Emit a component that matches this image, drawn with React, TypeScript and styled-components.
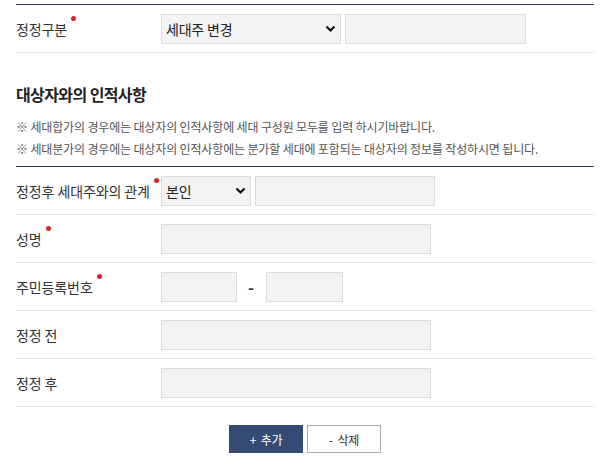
import React from "react";
import styled, { createGlobalStyle } from "styled-components";

const GlobalStyle = createGlobalStyle`
  body {
    margin: 0;
    background: #ffffff;
    font-family: "Noto Sans CJK KR", "Noto Sans", sans-serif;
    color: #333333;
  }
`;

const Page = styled.div`
  padding: 4px 20px 0 16px;
  width: 578px;
`;

const Table = styled.div`
  border-top: 1px solid #2f3d53;
`;

const Row = styled.div`
  display: flex;
  align-items: center;
  height: 47px;
  border-bottom: 1px solid #e6e6e6;
`;

const Label = styled.div`
  width: 145px;
  flex-shrink: 0;
  font-size: 14px;
  letter-spacing: -0.1px;
  color: #333333;
`;

const LabelText = styled.span<{ $required?: boolean }>`
  position: relative;
  &::after {
    content: "";
    display: ${(p) => (p.$required ? "block" : "none")};
    position: absolute;
    right: -9px;
    top: -3px;
    width: 5px;
    height: 5px;
    border-radius: 50%;
    background: #d9252f;
  }
`;

const Field = styled.div`
  display: flex;
  align-items: center;
  gap: 4px;
`;

const TextInput = styled.input<{ $w: number }>`
  box-sizing: border-box;
  width: ${(p) => p.$w}px;
  height: 30px;
  margin: 0;
  background: #f3f3f3;
  border: 1px solid #dcdcdc;
  outline: none;
`;

const SelectWrap = styled.div<{ $w: number }>`
  position: relative;
  width: ${(p) => p.$w}px;
  height: 30px;
`;

const Select = styled.select`
  box-sizing: border-box;
  width: 100%;
  height: 100%;
  margin: 0;
  padding: 0 4px;
  appearance: none;
  background: #f3f3f3;
  border: 1px solid #dcdcdc;
  font-family: "Noto Sans CJK KR", sans-serif;
  font-size: 14px;
  letter-spacing: -0.2px;
  color: #222222;
  outline: none;
`;

const Chevron = styled.svg`
  position: absolute;
  right: 5px;
  top: 11px;
  pointer-events: none;
`;

const Dash = styled.span`
  font-size: 16px;
  font-weight: 700;
  color: #333333;
  margin: 0 8px 0 7px;
`;

const SectionTitle = styled.h3`
  margin: 29px 0 0;
  font-size: 16px;
  font-weight: 700;
  letter-spacing: -0.6px;
  color: #222222;
`;

const Notes = styled.ul`
  list-style: none;
  margin: 10px 0 6px;
  padding: 0;
`;

const Note = styled.li`
  font-size: 12px;
  line-height: 22px;
  letter-spacing: -0.15px;
  color: #555555;
`;

const Buttons = styled.div`
  display: flex;
  justify-content: center;
  gap: 4px;
  margin-top: 18px;
`;

const Button = styled.button<{ $primary?: boolean }>`
  box-sizing: border-box;
  width: 74px;
  height: 28px;
  margin: 0;
  font-family: "Noto Sans CJK KR", sans-serif;
  font-size: 12px;
  letter-spacing: -0.3px;
  border: 1px solid ${(p) => (p.$primary ? "#344c75" : "#aaaaaa")};
  background: ${(p) => (p.$primary ? "#344c75" : "#ffffff")};
  color: ${(p) => (p.$primary ? "#ffffff" : "#333333")};
  cursor: pointer;
`;

const Arrow = () => (
  <Chevron width="11" height="8" viewBox="0 0 11 8">
    <path d="M1.5 1.5 L5.5 5.5 L9.5 1.5" fill="none" stroke="#111" strokeWidth="2.2" />
  </Chevron>
);

export default function App() {
  return (
    <Page>
      <GlobalStyle />
      <Table>
        <Row>
          <Label>
            <LabelText $required>정정구분</LabelText>
          </Label>
          <Field>
            <SelectWrap $w={180}>
              <Select defaultValue="세대주 변경">
                <option>세대주 변경</option>
              </Select>
              <Arrow />
            </SelectWrap>
            <TextInput $w={181} />
          </Field>
        </Row>
      </Table>

      <SectionTitle>대상자와의 인적사항</SectionTitle>
      <Notes>
        <Note>※ 세대합가의 경우에는 대상자의 인적사항에 세대 구성원 모두를 입력 하시기바랍니다.</Note>
        <Note>※ 세대분가의 경우에는 대상자의 인적사항에는 분가할 세대에 포함되는 대상자의 정보를 작성하시면 됩니다.</Note>
      </Notes>

      <Table>
        <Row>
          <Label>
            <LabelText $required>정정후 세대주와의 관계</LabelText>
          </Label>
          <Field>
            <SelectWrap $w={90}>
              <Select defaultValue="본인">
                <option>본인</option>
              </Select>
              <Arrow />
            </SelectWrap>
            <TextInput $w={180} />
          </Field>
        </Row>
        <Row>
          <Label>
            <LabelText $required>성명</LabelText>
          </Label>
          <TextInput $w={270} />
        </Row>
        <Row>
          <Label>
            <LabelText $required>주민등록번호</LabelText>
          </Label>
          <Field>
            <TextInput $w={76} />
            <Dash>-</Dash>
            <TextInput $w={77} />
          </Field>
        </Row>
        <Row>
          <Label>
            <LabelText>정정 전</LabelText>
          </Label>
          <TextInput $w={270} />
        </Row>
        <Row>
          <Label>
            <LabelText>정정 후</LabelText>
          </Label>
          <TextInput $w={270} />
        </Row>
      </Table>

      <Buttons>
        <Button $primary>+&nbsp;&nbsp;추가</Button>
        <Button>-&nbsp;&nbsp;삭제</Button>
      </Buttons>
    </Page>
  );
}
